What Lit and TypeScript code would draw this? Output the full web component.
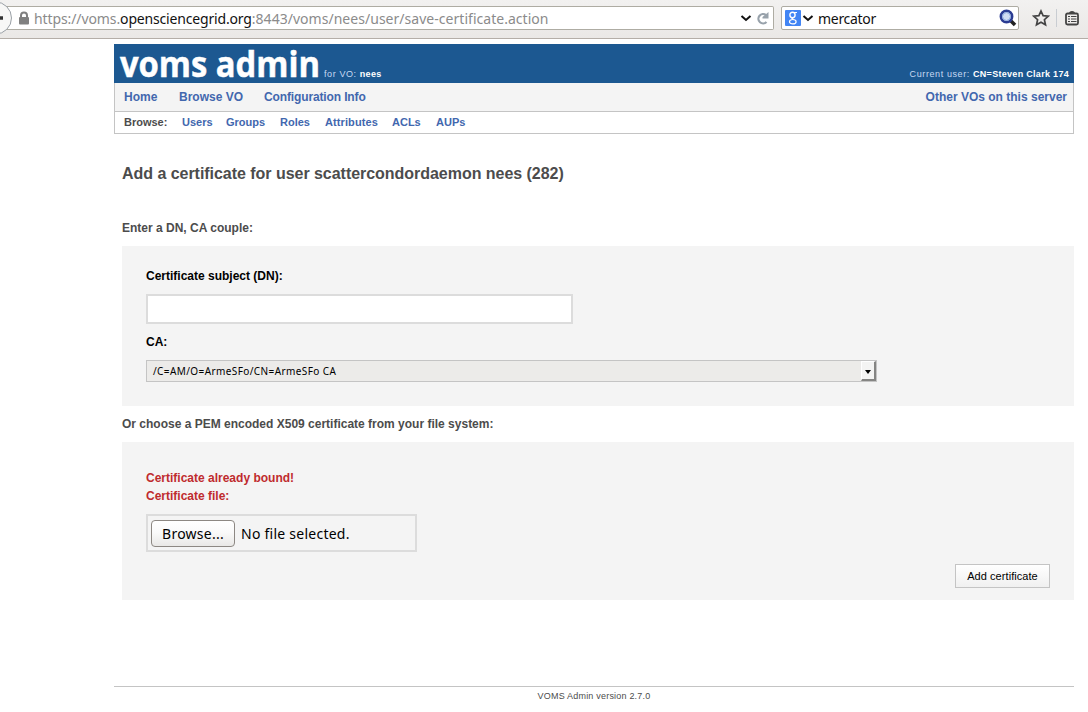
import { LitElement, html, css } from "lit";
import { customElement } from "lit/decorators.js";

@customElement("app-root")
export class AppRoot extends LitElement {
  static styles = css`
    :host { display: block; width: 1088px; height: 712px; overflow: hidden; background: #fff; color: #4c4c4c; font: bold 12px/16px "Liberation Sans", Arial, sans-serif; }
    * { box-sizing: border-box; }
    svg { display: block; flex: none; }
    .toolbar { height: 39px; display: flex; align-items: flex-start; background: linear-gradient(#f2f1f0, #eae8e6); border-bottom: 1px solid #b4aea8; font: 14px/24px "Noto Sans", sans-serif; overflow: hidden; }
    .back { width: 12px; height: 38px; position: relative; z-index: 1; }
    .url { width: 768px; height: 24px; margin: 6px 0 0 -6px; padding-left: 5px; display: flex; border: solid #aeaca3; border-width: 1px 1px 1px 0; border-radius: 0 2px 2px 0; background: #fff; color: #8b8b8b; white-space: nowrap; }
    .lock { margin: 4px 4px 0 7px; }
    .addr { width: 706px; line-height: 24px; letter-spacing: .03px; }
    .scheme { letter-spacing: -.1px; }
    .addr b { color: #111; font-weight: 400; letter-spacing: -.17px; }
    .chev { margin-top: 6px; }
    .reload { margin: 4px 0 0 4px; }
    .search { width: 238px; height: 24px; margin: 6px 0 0 7px; padding-left: 3px; display: flex; border: 1px solid #aeaca3; border-radius: 2px; background: #fff; color: #111; }
    .google { margin-top: 3px; }
    .term { width: 185px; padding-left: 4px; letter-spacing: -.3px; }
    .glass { margin-top: 2px; }
    .star { margin: 9px 0 0 13px; }
    .sep { width: 1px; height: 18px; margin: 9px 7px 0 6px; background: #c9cdd2; }
    .clip { margin-top: 9px; }
    .page { width: 960px; margin: 5px 0 0 114px; }
    .banner { height: 39px; padding: 0 5px; display: flex; justify-content: space-between; background: #1c5891; color: #c7daf3; font-size: 9px; font-weight: 400; }
    .small b { color: #fff; letter-spacing: .3px; }
    .brand { display: flex; }
    .logo { width: 205px; font: bold 36px/39px "Open Sans", sans-serif; color: #fff; white-space: nowrap; transform: scaleX(.91); transform-origin: 0 0; -webkit-text-stroke: .5px #fff; padding-left: 1px; }
    .small { padding-top: 22px; letter-spacing: .6px; white-space: nowrap; }
    .menu { height: 29px; padding: 0 6px 0 9px; display: flex; background: #f4f4f4; border: solid #c4c4c4; border-width: 0 1px 1px; color: #4267ae; line-height: 28px; white-space: nowrap; }
    .menu span:last-child { margin-left: auto; }
    .home { width: 55px; } .bvo { width: 85px; }
    .conf { letter-spacing: -.13px; }
    .sub { height: 22px; padding-left: 9px; display: flex; border: solid #c4c4c4; border-width: 0 1px 1px; color: #4267ae; font-size: 11px; line-height: 21px; white-space: nowrap; }
    .browse { width: 58px; color: #4c4c4c; }
    .s1 { width: 44px; } .s2 { width: 54px; } .s3 { width: 45px; } .s4 { width: 67px; letter-spacing: .1px; } .s5 { width: 44px; }
    .content { height: 552px; padding-left: 8px; }
    h1 { margin: 0; padding-top: 29px; height: 86px; font-size: 16px; line-height: 22px; letter-spacing: -.035px; }
    h2 { margin: 0; height: 26px; font-size: 12px; line-height: 16px; }
    .panel { background: #f4f4f4; padding: 22px 24px 0; color: #000; }
    .dn { height: 160px; }
    .pem { height: 158px; padding-top: 27px; }
    .field { width: 427px; height: 30px; margin: 10px 0; border: 2px solid #dcdcdc; background: #fff; }
    .select { width: 731px; height: 22px; margin-top: 10px; padding-left: 6px; display: flex; justify-content: space-between; border: 1px solid #c4c4c4; background: #ecebe9; font: 10px/21px "Noto Sans", sans-serif; letter-spacing: .4px; }
    .arrow { width: 15px; height: 20px; padding: 8px 0 0 3px; background: #f4f4f3; border: solid; border-width: 1px 2px 2px 1px; border-color: #fff #858583 #858583 #fff; }
    .or { margin-top: 10px; }
    .error { color: #bf2b2e; line-height: 18px; }
    .file { width: 271px; height: 38px; margin-top: 9px; padding: 4px 3px 3px; display: flex; border: 2px solid #dcdcdc; font: 14px/27px "Noto Sans", sans-serif; letter-spacing: .25px; white-space: nowrap; }
    .pick { flex: none; width: 84px; height: 27px; margin-right: 6px; border: 1px solid #8d8883; border-radius: 4px; background: linear-gradient(#fff, #fafafa 45%, #e9e8e6); text-align: center; line-height: 26px; }
    .add { width: 95px; height: 24px; margin: 12px 0 0 auto; border: 1px solid #c4c4c4; background: linear-gradient(#fff, #f0f0f0); font-size: 11px; font-weight: 400; letter-spacing: .06px; text-align: center; line-height: 23px; }
    footer { border-top: 1px solid #c4c4c4; font-size: 9px; font-weight: 400; text-align: center; line-height: 19px; letter-spacing: .2px; }
  `;

  render() {
    return html`
      <div class="toolbar">
        <svg class="back" viewBox="0 0 12 38"><circle cx="-4.500" cy="18" r="16" fill="#f7f7f6" stroke="#9aa0a6"/><path d="M0 18h3" stroke="#333" stroke-width="3.500"/></svg>
        <div class="url">
          <svg class="lock" width="12" height="14" viewBox="0 0 12 14"><path d="M3 7V4.500a3 3 0 0 1 6 0V7" fill="none" stroke="#808080" stroke-width="2"/><rect x="1" y="6" width="10" height="7.500" rx="1" fill="#808080"/></svg>
          <span class="addr"><span class="scheme">https://voms.</span><b>opensciencegrid.org</b>:8443/voms/nees/user/save-certificate.action</span>
          <svg class="chev" width="12" height="10" viewBox="0 0 12 10"><path d="M1.500 3l4.500 4 4.500-4" fill="none" stroke="#111" stroke-width="2"/></svg>
          <svg class="reload" width="14" height="14" viewBox="0 0 14 14"><path d="M10.500 11A4.700 4.700 0 1 1 10 4" fill="none" stroke="#98a2ab" stroke-width="2.200"/><path d="M12.500 1v6.500H6.500V6z" fill="#98a2ab"/></svg>
        </div>
        <div class="search">
          <svg class="google" width="16" height="16" viewBox="0 0 16 16"><rect width="16" height="16" rx="1" fill="#4285f4"/><g fill="none" stroke="#fff"><ellipse cx="7.500" cy="5" rx="2.600" ry="2.700" stroke-width="1.400"/><path d="M8 2.500h4M8.500 7.500C6 8 7 9 8.500 9.500" stroke-width="1.200"/><ellipse cx="7.800" cy="11.700" rx="3.300" ry="2.200" stroke-width="1.200"/></g></svg>
          <svg class="chev" width="13" height="10" viewBox="0 0 13 10"><path d="M2.500 3L7 7l4.500-4" fill="none" stroke="#111" stroke-width="2"/></svg>
          <span class="term">mercator</span>
          <svg class="glass" width="18" height="18" viewBox="0 0 18 18"><path d="M12 12l4 4" stroke="#222" stroke-width="3.500"/><circle cx="7.500" cy="7.500" r="5.700" fill="#cfdcf2" stroke="#2b3c92" stroke-width="2.500"/><circle cx="7.500" cy="7.500" r="4" fill="none" stroke="#86a5dc"/></svg>
        </div>
        <svg class="star" width="18" height="18" viewBox="0 0 18 18"><path d="M9 2l2.100 4.700 5.100.5-3.800 3.500 1.100 5.100L9 13.200l-4.500 2.600 1.100-5.100L1.800 7.200l5.100-.5z" fill="none" stroke="#444" stroke-width="1.700"/></svg>
        <span class="sep"></span>
        <svg class="clip" width="16" height="18" viewBox="0 0 16 18"><rect x="2" y="4.500" width="12" height="11" rx="1.500" fill="none" stroke="#444" stroke-width="1.800"/><path d="M5 4.500q0-2.500 3-2.500t3 2.500z" fill="#444"/><path d="M4 7.500h2M7 7.500h5.500M4 10h2M7 10h5.500M4 12.500h2M7 12.500h5.500" stroke="#444" stroke-width="1.200"/></svg>
      </div>
      <div class="page">
        <div class="banner">
          <div class="brand"><span class="logo">voms admin</span><span class="small">for VO: <b>nees</b></span></div>
          <span class="small">Current user: <b>CN=Steven Clark 174</b></span>
        </div>
        <nav class="menu"><span class="home">Home</span><span class="bvo">Browse VO</span><span class="conf">Configuration Info</span><span>Other VOs on this server</span></nav>
        <nav class="sub"><span class="browse">Browse:</span><span class="s1">Users</span><span class="s2">Groups</span><span class="s3">Roles</span><span class="s4">Attributes</span><span class="s5">ACLs</span><span>AUPs</span></nav>
        <main class="content">
          <h1>Add a certificate for user scattercondordaemon nees (282)</h1>
          <h2>Enter a DN, CA couple:</h2>
          <section class="panel dn">
            <div>Certificate subject (DN):</div>
            <div class="field"></div>
            <div>CA:</div>
            <div class="select"><span>/C=AM/O=ArmeSFo/CN=ArmeSFo CA</span><span class="arrow"><svg width="6" height="4" viewBox="0 0 6 4"><path d="M0 0h6L3 4z"/></svg></span></div>
          </section>
          <h2 class="or">Or choose a PEM encoded X509 certificate from your file system:</h2>
          <section class="panel pem">
            <div class="error">Certificate already bound!</div>
            <div class="error">Certificate file:</div>
            <div class="file"><span class="pick">Browse...</span><span>No file selected.</span></div>
            <div class="add">Add certificate</div>
          </section>
        </main>
        <footer>VOMS Admin version 2.7.0</footer>
      </div>
    `;
  }
}
